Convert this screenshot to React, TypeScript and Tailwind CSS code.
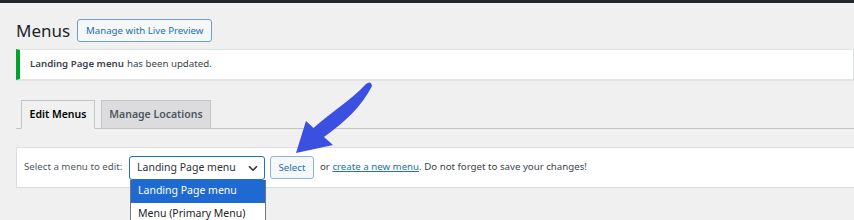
import React from "react";

export default function App() {
  return (
    <div className="relative w-[854px] h-[220px] overflow-hidden bg-[#f0f0f1] font-['Noto_Sans',sans-serif] text-[#3c434a]">
      <div className="h-[3px] bg-[#23282d]" />
      <div className="pl-4">
        <div className="mt-4 flex h-[23px] items-center gap-[7px]">
          <h1 className="text-[17px] leading-none text-[#1d2327]">Menus</h1>
          <button className="h-[23px] w-[135px] rounded-[3px] border border-[#6f9fd0] bg-[#f6f7f7] text-[9.7px] leading-none text-[#2271b1]">
            Manage with Live Preview
          </button>
        </div>

        <div className="mt-[7px] flex h-[31px] items-center border-y border-r border-y-[#e2e3e5] border-r-[#e2e3e5] border-l-4 border-l-[#00a32a] bg-white pl-[10px] text-[9.7px] shadow-[0_1px_1px_rgba(0,0,0,0.05)]">
          <span className="font-semibold">Landing Page menu</span>
          <span className="ml-[3px]">has been updated.</span>
        </div>

        <div className="mt-[20px] flex h-[29px] gap-[6px] border-b border-[#c3c4c7] pl-[5px]">
          <div className="-mb-px flex h-[29px] w-[74px] items-center justify-center border border-[#c3c4c7] border-b-[#f0f0f1] bg-[#f0f0f1] text-[10.5px] font-semibold text-[#000]">
            Edit Menus
          </div>
          <div className="-mb-px flex h-[29px] w-[110px] items-center justify-center border border-[#c3c4c7] bg-[#dcdcde] text-[10.5px] font-semibold text-[#50575e]">
            Manage Locations
          </div>
        </div>

        <div className="mt-[18px] flex h-[41px] items-center border border-r-0 border-[#dcdcde] bg-white pl-[7px] text-[9.7px]">
          <span className="w-[99px] whitespace-nowrap text-[#50575e]">Select a menu to edit:</span>
          <div className="relative ml-[6px] flex h-[24px] w-[136px] items-center rounded-[3px] border border-[#2271b1] bg-white pl-[7px] text-[10.5px] text-[#2c3338]">
            Landing Page menu
            <svg className="absolute right-[6px] top-[8px]" width="10" height="7" viewBox="0 0 10 7">
              <path d="M1 1.2 L5 5.2 L9 1.2" fill="none" stroke="#2c3338" strokeWidth="1.6" />
            </svg>
            <div className="absolute left-0 top-[23px] w-[136px] border-x border-[#767676] bg-white">
              <div className="flex h-[23px] items-center bg-[#1e6ad2] pl-[7px] text-white">Landing Page menu</div>
              <div className="flex h-[23px] items-center pl-[7px] text-[#1d2327]">Menu (Primary Menu)</div>
            </div>
          </div>
          <button className="ml-[5px] h-[23px] w-[44px] rounded-[3px] border border-[#8cb2d9] bg-[#f6f7f7] text-[9.7px] leading-none text-[#2271b1]">
            Select
          </button>
          <span className="ml-[6px] whitespace-nowrap">
            or <a className="text-[#2271b1] underline">create a new menu</a>. Do not forget to save your changes!
          </span>
        </div>
      </div>

      <svg className="pointer-events-none absolute left-0 top-0" width="854" height="220" viewBox="0 0 854 220">
        <path
          d="M296 153 L306 121 L313.5 128 C330 113 350 101 366 84 Q371 80 372 86 C362 106 345 122 324 137 L333 145 Z"
          fill="#3b4fe0"
        />
      </svg>
    </div>
  );
}
